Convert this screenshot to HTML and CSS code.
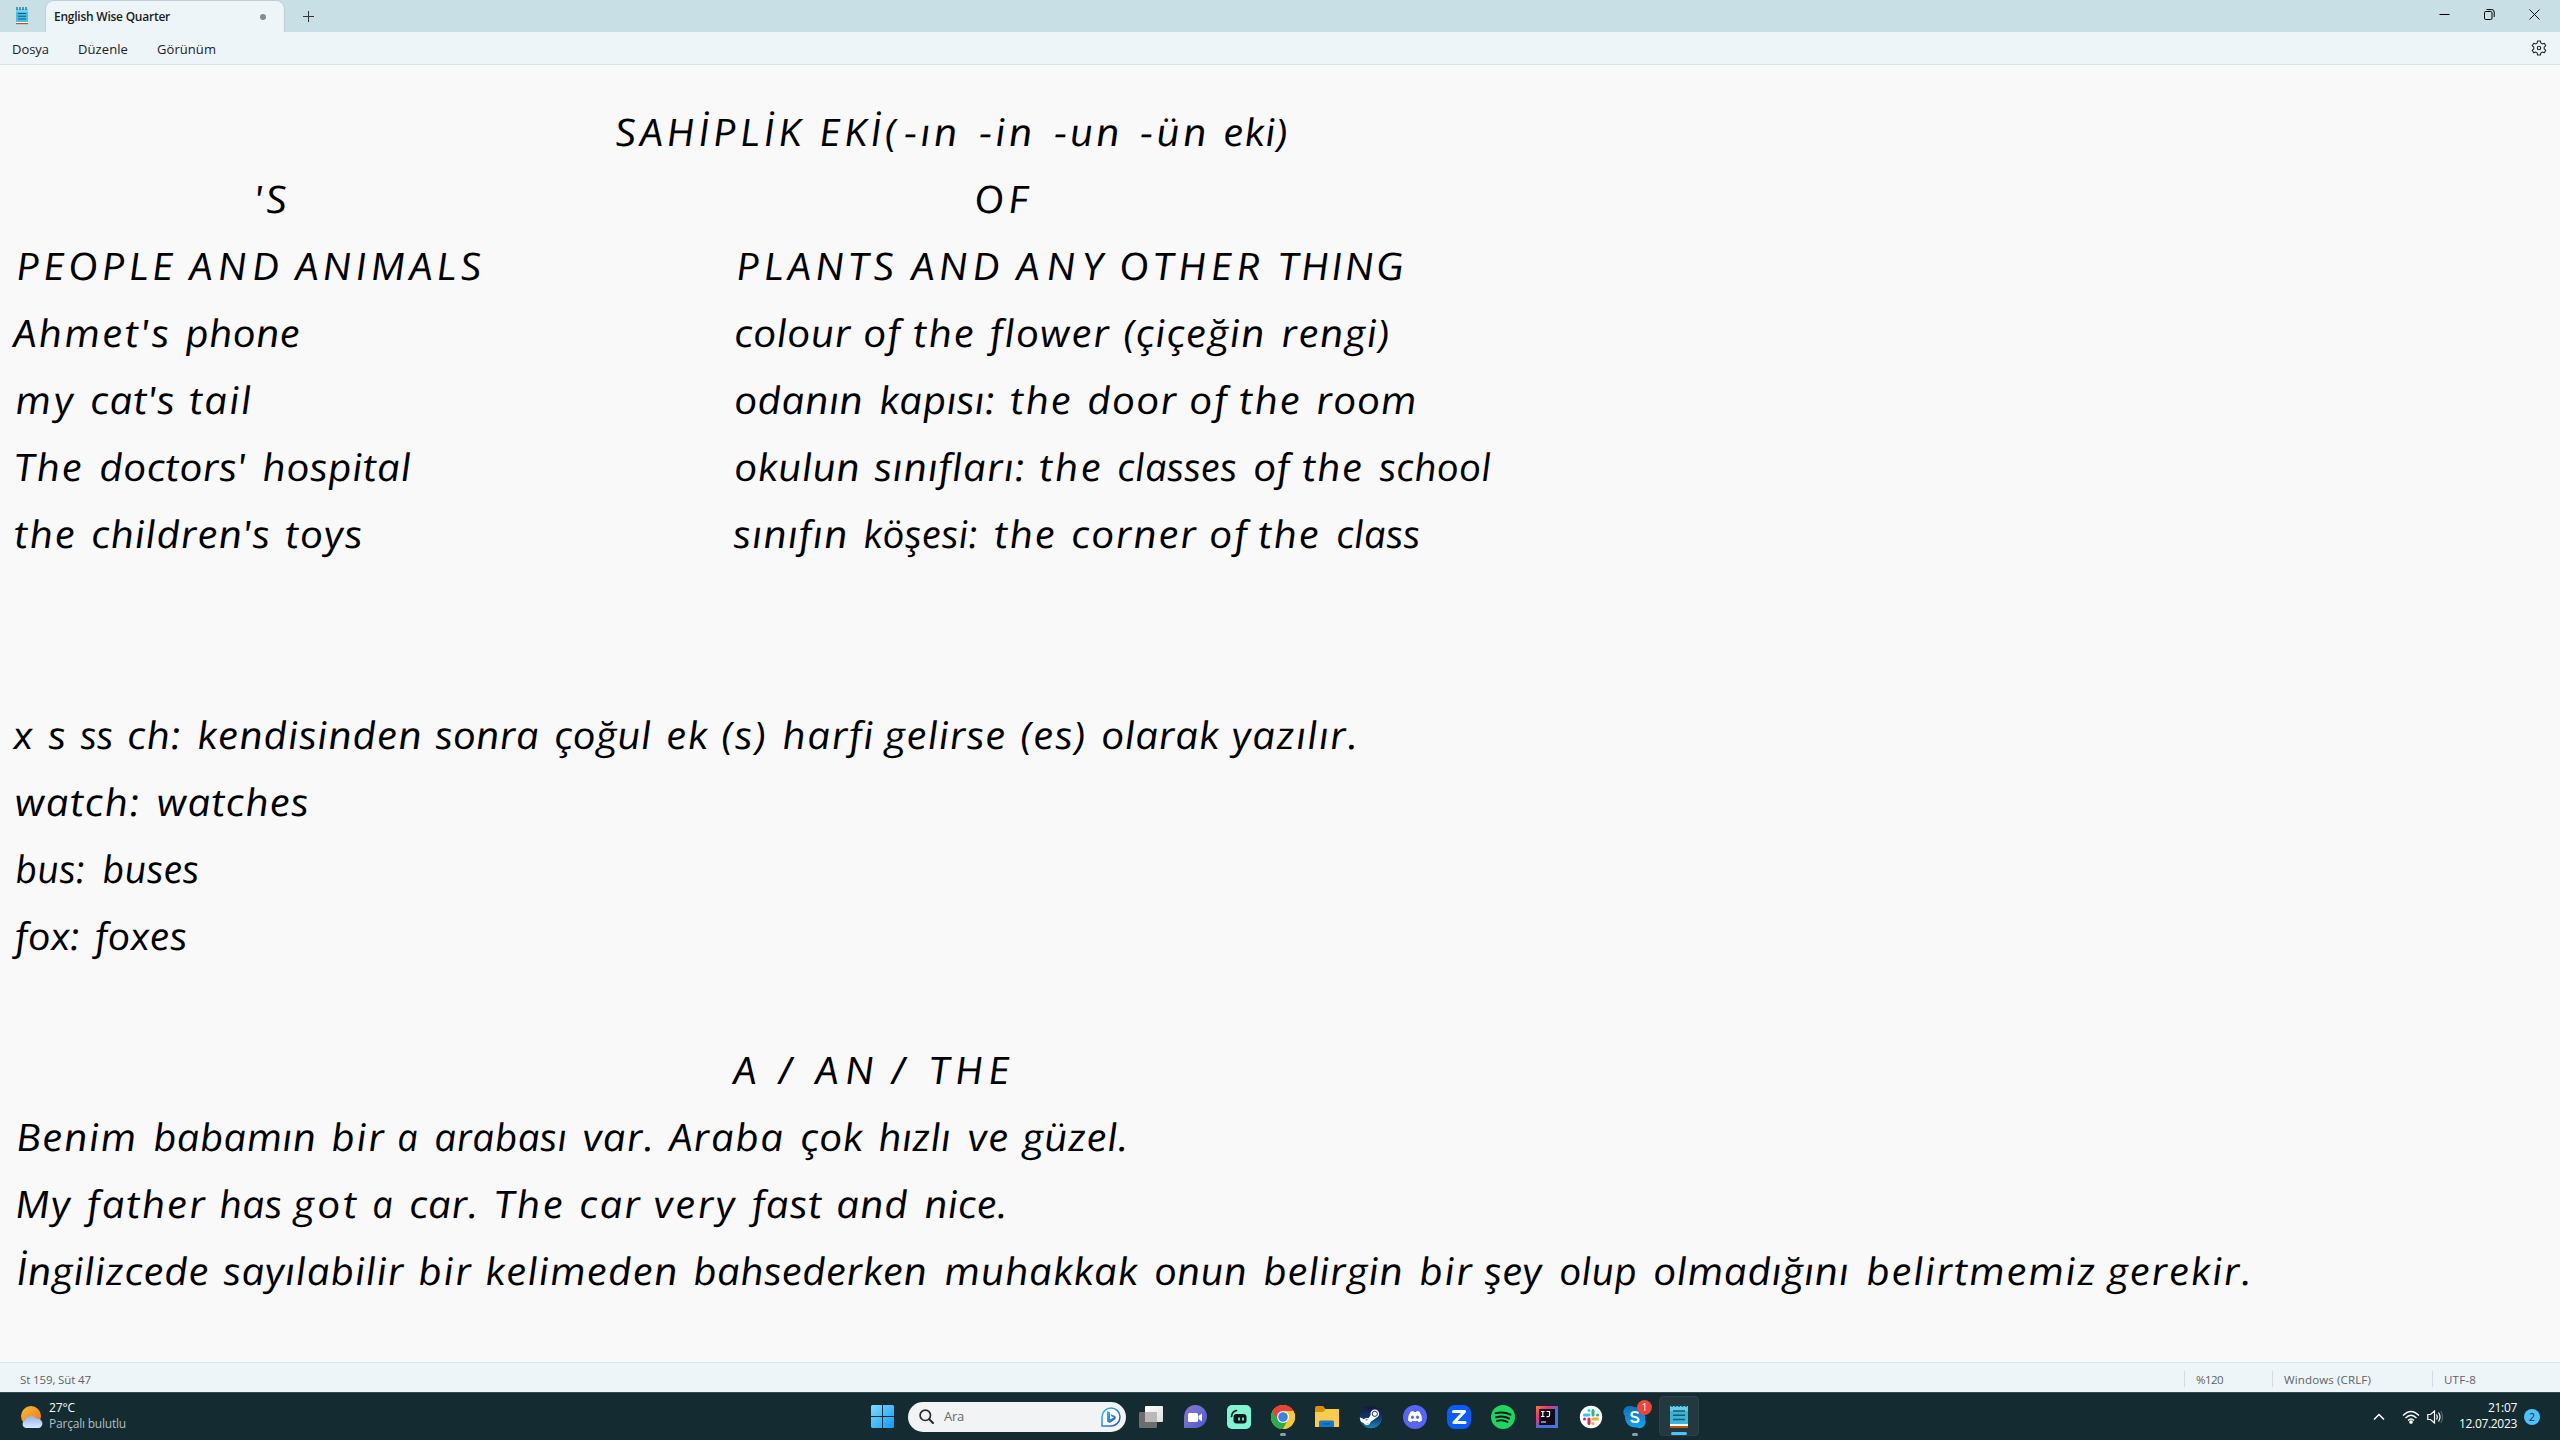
FILE: index.html
```html
<!DOCTYPE html>
<html lang="tr">
<head>
<meta charset="utf-8">
<title>English Wise Quarter</title>
<link rel="stylesheet" href="styles.css">
</head>
<body>
<header class="titlebar">
  <svg class="app-icon" width="14" height="18" viewBox="0 0 14 18"><rect x="1" y="2" width="12" height="13" fill="#45bfe0"/><path d="M1 2h12v3H1z" fill="#6fd4ee"/><path d="M2 0v3M5 0v3M8 0v3M11 0v3" stroke="#1b6f93" stroke-width="1.3"/><path d="M3 6.5h8M3 9.3h8M3 12h8" stroke="#0d5c86" stroke-width="1.1"/><path d="M1 15h12v1H1z" fill="#f5f5f5"/><path d="M1 16h12v1.2H1z" fill="#b5561a"/></svg>
  <div class="tab"><span class="tab-name" data-w="116">English Wise Quarter</span><i class="unsaved"></i></div>
  <svg class="new-tab" width="11" height="11" viewBox="0 0 11 11"><path d="M5.5 0v11M0 5.5h11" stroke="#333"/></svg>
  <svg class="caption minimize" width="11" height="11" viewBox="0 0 11 11"><path d="M.5 5.5h10" stroke="#000"/></svg>
  <svg class="caption restore" width="11" height="11" viewBox="0 0 11 11" fill="none" stroke="#000"><rect x=".5" y="2.5" width="7.5" height="8" rx="1.3"/><path d="M2.5 .6h5.3q2.4 0 2.4 2.4v5"/></svg>
  <svg class="caption close" width="11" height="11" viewBox="0 0 11 11"><path d="M.5.5l10 10M10.500.5l-10 10" stroke="#111"/></svg>
</header>
<nav class="menubar">
  <span data-w="37">Dosya</span><span data-w="50">Düzenle</span><span data-w="59">Görünüm</span>
  <svg class="gear" width="16" height="16" viewBox="0 0 16 16" fill="none" stroke="#222" stroke-width="1.1" stroke-linejoin="round"><path d="M6.600 1h2.800l.5 2.100 1.300.8 2.100-.7 1.500 2.500-1.600 1.400v1.800l1.600 1.400-1.500 2.500-2.100-.7-1.300.8-.5 2.100H6.600l-.5-2.100-1.300-.8-2.100.7-1.500-2.500 1.600-1.400V7.100L1.200 5.700l1.500-2.500 2.100.7 1.300-.8z"/><circle cx="8" cy="8" r="1.700"/></svg>
</nav>
<main class="editor" id="editor"></main>
<footer class="statusbar">
  <span class="cell position"><b data-w="71">St 159, Süt 47</b></span>
  <span class="cell zoom"><b data-w="27">%120</b></span>
  <span class="cell eol"><b data-w="87">Windows (CRLF)</b></span>
  <span class="cell encoding"><b data-w="32">UTF-8</b></span>
</footer>
<div class="taskbar">
  <div class="weather">
    <svg width="24" height="24" viewBox="0 0 24 24"><defs><linearGradient id="sun" x2="1" y2="1"><stop stop-color="#f9bd32"/><stop offset="1" stop-color="#f0701b"/></linearGradient><linearGradient id="cloud" x2="0" y2="1"><stop stop-color="#8eb4f2"/><stop offset="1" stop-color="#dce8fc"/></linearGradient></defs><circle cx="11" cy="11" r="10" fill="url(#sun)"/><path d="M6 23a4 4 0 0 1-.5-7.800 6 6 0 0 1 11-1.200 4.600 4.600 0 0 1 2.500 9z" fill="url(#cloud)"/></svg>
    <div class="weather-text"><span data-w="26">27°C</span><span class="dim" data-w="77">Parçalı bulutlu</span></div>
  </div>
  <svg class="start" width="23" height="23" viewBox="0 0 23 23"><defs><linearGradient id="win" x2="1" y2="1"><stop stop-color="#7fdcff"/><stop offset="1" stop-color="#0c9bf5"/></linearGradient></defs><path d="M1 0h10v11H0V1zM12 0h10l1 1v10H12zM0 12h11v11H1l-1-1zM12 12h11v10l-1 1H12z" fill="url(#win)"/></svg>
  <div class="search">
    <svg width="15" height="15" viewBox="0 0 15 15" fill="none" stroke="#2a2a2e" stroke-linecap="round"><circle cx="6.300" cy="6.300" r="5.200" stroke-width="1.700"/><path d="M10.200 10.200L14 14" stroke-width="2"/></svg>
    <span class="search-label" data-w="20">Ara</span>
    <svg class="bing" width="20" height="20" viewBox="0 0 20 20"><defs><linearGradient id="bing" x2="1" y2="1"><stop stop-color="#32bdf0"/><stop offset="1" stop-color="#2452cc"/></linearGradient></defs><path d="M1 19V10a9 9 0 1 1 9 9z" fill="#fff" stroke="url(#bing)" stroke-width="1.500"/><path d="M6 4l3 1.200v7l4-1.800-2.700-1.200L9.500 7 14 9c1 .5 1 2.500 0 3.500L8.500 16 6 14.500z" fill="url(#bing)"/></svg>
  </div>
  <div class="apps">
    <div class="app"><svg viewBox="0 0 24 24"><defs><linearGradient id="tv" x2="1" y2="1"><stop stop-color="#fff"/><stop offset="1" stop-color="#ddd"/></linearGradient></defs><rect x="6" y="1" width="18" height="16" rx="1" fill="url(#tv)"/><rect y="7" width="18" height="16" rx="1" fill="#6d6d6d"/><path d="M6 7h12v10H6z" fill="#b8b8b8"/></svg></div>
    <div class="app"><svg viewBox="0 0 24 24"><defs><linearGradient id="chat" x2="1" y2="1"><stop stop-color="#9768cf"/><stop offset=".4" stop-color="#7073ce"/><stop offset="1" stop-color="#4b54ca"/></linearGradient></defs><path d="M1 23V12A11.500 11.500 0 1 1 12.500 23z" fill="url(#chat)"/><rect x="5" y="8" width="10" height="9" rx="1.500" fill="#fff"/><path d="M15.500 11L19 8.500v8L15.500 14z" fill="#fff"/></svg></div>
    <div class="app"><svg viewBox="0 0 24 24"><rect width="24" height="24" rx="5" fill="#80f5d2"/><rect x="6.500" y="9" width="13" height="9.500" rx="3" fill="#09161d"/><path d="M4.500 11.500q.5-5 5-6" fill="none" stroke="#09161d" stroke-width="1.700" stroke-linecap="round"/><path d="M12 12.500v3M16 12.500v3" stroke="#80f5d2" stroke-width="1.700"/></svg></div>
    <div class="app running"><svg viewBox="0 0 24 24"><circle cx="12" cy="12" r="12" fill="#fcc934"/><path d="M12 12L1.600 6A12 12 0 0 0 12 24l5.200-9z" fill="#2da94f"/><path d="M1.600 6A12 12 0 0 1 22.400 6H12v6L6.800 15z" fill="#ea4335"/><path d="M22.400 6A12 12 0 0 1 12 24l5.200-9L17 7z" fill="#fcc934"/><circle cx="12" cy="12" r="6" fill="#fff"/><circle cx="12" cy="12" r="4.800" fill="#3b82f0"/></svg></div>
    <div class="app"><svg viewBox="0 0 24 24"><path d="M0 3q0-2 2-2h6l2.500 3H24v5H0z" fill="#d99208"/><path d="M0 7h8l3-3h13v18H0z" fill="#fbcc4c"/><path d="M4 22v-5q0-1.500 1.500-1.500h12q1.500 0 1.500 1.500v5z" fill="#1278d0"/><path d="M8 18.800h7" stroke="#0c5ba8" stroke-width="1.300"/></svg></div>
    <div class="app"><svg viewBox="0 0 24 24"><defs><linearGradient id="steam" x2="0" y2="1"><stop stop-color="#12193c"/><stop offset=".5" stop-color="#11366b"/><stop offset="1" stop-color="#1687bd"/></linearGradient><clipPath id="round"><circle cx="12" cy="12" r="11.200"/></clipPath></defs><circle cx="12" cy="12" r="11.200" fill="url(#steam)"/><g clip-path="url(#round)"><path d="M0 12l8 3.500 4-6 5 3.500-7 5-3 1-7-3z" fill="#fff"/></g><circle cx="8" cy="16.500" r="2.800" fill="none" stroke="#fff" stroke-width="1.200"/><circle cx="15.800" cy="8.800" r="4.300" fill="#fff"/><circle cx="15.800" cy="8.800" r="2.600" fill="#fff" stroke="#173665" stroke-width="1"/></svg></div>
    <div class="app"><svg viewBox="0 0 24 24"><circle cx="12" cy="12" r="12" fill="#5865f2"/><path d="M7.500 6.800q1.400-.7 2.800-.8l.5 1h2.400l.5-1q1.400.1 2.800.8 2.800 4 2.500 8.800-1.600 1.300-3.300 1.600l-.9-1.400q-2.800.9-5.600 0l-.9 1.400Q6.600 16.900 5 15.600 4.700 10.800 7.500 6.800z" fill="#fff"/><ellipse cx="9.500" cy="12.200" rx="1.500" ry="1.700" fill="#5865f2"/><ellipse cx="14.500" cy="12.200" rx="1.500" ry="1.700" fill="#5865f2"/></svg></div>
    <div class="app"><svg viewBox="0 0 24 24"><rect width="24" height="24" rx="8" fill="#0b5cff"/><path d="M6.500 6.500h11L7 17.500h11" fill="none" stroke="#fff" stroke-width="3.200" stroke-linejoin="round" stroke-linecap="round"/></svg></div>
    <div class="app"><svg viewBox="0 0 24 24"><circle cx="12" cy="12" r="12" fill="#1fd562"/><path d="M4.500 8.300q8-2.300 15 1.300M5.200 12.200q7-1.900 12.800 1.300M6 15.900q6-1.500 10.500 1.100" fill="none" stroke="#101a14" stroke-width="2" stroke-linecap="round"/></svg></div>
    <div class="app"><svg viewBox="0 0 24 24"><defs><linearGradient id="ij" x2="1" y2="1"><stop stop-color="#fc7a25"/><stop offset=".3" stop-color="#f0307c"/><stop offset=".6" stop-color="#3c72e8"/><stop offset="1" stop-color="#4777e0"/></linearGradient></defs><rect x="1" y="1" width="22" height="22" fill="url(#ij)"/><rect x="4" y="4" width="16" height="16" fill="#110a17"/><path d="M6 6.500h3.500M7.800 6.500v5M6 11.500h3.500M11.500 6.500h3v4q0 1.200-1.300 1.200H11.500M6 17h5" stroke="#fff" stroke-width="1.200" fill="none"/></svg></div>
    <div class="app"><svg viewBox="0 0 24 24"><circle cx="12" cy="12" r="11.200" fill="#fff"/><g stroke-width="3" stroke-linecap="round"><path d="M10 5.500v0M5.500 10H10" stroke="#36c5f0"/><path d="M14 5.500V10M18.500 10h0" stroke="#2eb67d"/><path d="M14 14h4.500M14 18.500h0" stroke="#ecb22e"/><path d="M10 14v4.500M5.500 14h0" stroke="#e01e5a"/></g></svg></div>
    <div class="app running"><svg viewBox="0 0 24 24"><defs><linearGradient id="skype" x2="0" y2="1"><stop stop-color="#0b72bb"/><stop offset="1" stop-color="#12a4ed"/></linearGradient></defs><path d="M7 1q3 0 4.500 1A10.500 10.500 0 0 1 22 14.500 6 6 0 0 1 14 22.500 10.500 10.500 0 0 1 2 11 6 6 0 0 1 7 1z" fill="url(#skype)"/><path d="M15.500 8.500Q14.500 7 12 7q-3.500 0-3.500 2.400 0 1.900 3.500 2.600t3.500 2.700Q15.500 17 12 17q-2.800 0-4-2" fill="none" stroke="#fff" stroke-width="2.200"/></svg><span class="count">1</span></div>
    <div class="app active"><svg viewBox="0 0 24 24"><path d="M3 2h18v18H3z" fill="#3fb3d3"/><path d="M3 2h18v5H3z" fill="#66cfe6"/><path d="M5 0v3M8.500 0v3M12 0v3M15.500 0v3M19 0v3" stroke="#124a62" stroke-width="1.500"/><path d="M6 7h12M6 11.200h12M6 15.400h12" stroke="#0b5d7c" stroke-width="1.500"/><path d="M3 20h18v2H3z" fill="#fafafa"/><path d="M3 22h18v2H3z" fill="#b15a19"/></svg></div>
  </div>
  <div class="tray">
    <svg width="12" height="8" viewBox="0 0 12 8"><path d="M1 6.500l5-5 5 5" fill="none" stroke="#fff" stroke-width="1.500"/></svg>
    <svg class="wifi" width="18" height="14" viewBox="0 0 18 14" fill="none" stroke="#fff" stroke-width="1.300"><path d="M1 5.500q8-8 16 0M3.500 8q5.500-5.500 11 0M6 10.500q3-3 6 0"/><circle cx="9" cy="12" r="1.200" fill="#fff"/></svg>
    <svg class="sound" width="17" height="14" viewBox="0 0 17 14" fill="none" stroke="#fff" stroke-width="1.200"><path d="M.8 4.500h2.700L7.500 1v12L3.500 9.500H.8zM9.500 4.500q1.500 2.500 0 5M11.500 2.500q3 4.500 0 9"/><path d="M13.800 1q3.500 6 0 12" stroke="#53656a"/></svg>
    <div class="clock"><span data-w="29">21:07</span><span data-w="58">12.07.2023</span></div>
    <span class="badge">2</span>
  </div>
</div>
<script src="notes.js"></script>
</body>
</html>
```
FILE: styles.css
```css
* { box-sizing: border-box; }
body {
  margin: 0;
  width: 2560px;
  height: 1440px;
  overflow: hidden;
  display: grid;
  grid-template-rows: 32px 33px 1297px 30px 48px;
  background: #f9f9f9;
  font: 12px "Open Sans", "Noto Sans", sans-serif;
  color: #1b1b1b;
}
svg { display: block; flex: none; }
[data-w] { white-space: pre; }

.titlebar { display: flex; align-items: center; background: #c9dfe6; }
.app-icon { margin: 0 16px 0 15px; }
.tab {
  width: 238px;
  height: 31px;
  align-self: flex-end;
  margin-left: 1px;
  padding: 0 18px 0 8px;
  display: flex;
  align-items: center;
  justify-content: space-between;
  background: #eef5f8;
  border-radius: 8px 8px 0 0;
  box-shadow: 0 0 0 1px #bacfd7;
}
.tab-name { font-weight: 600; }
.unsaved { width: 6px; height: 6px; border-radius: 50%; background: #868a8c; }
.new-tab { margin-left: 19px; }
.minimize { margin-left: auto; margin-bottom: 3px; }
.restore { margin: 0 34px 4px; }
.close { margin: 0 20px 4px 0; }

.menubar {
  display: flex;
  align-items: center;
  gap: 29px;
  padding: 1px 13px 0 12px;
  background: #eef5f8;
  border-bottom: 1px solid #d9e1e5;
  font-size: 13px;
}
.gear { margin-left: auto; margin-bottom: 1px; }

.editor {
  padding-top: 33px;
  font: italic 38px/67px "Open Sans", "Noto Sans", sans-serif;
  color: #000;
}
.line { display: flex; height: 67px; }
.word { flex: none; white-space: pre; transform-origin: 0 48px; }

.statusbar {
  display: flex;
  align-items: center;
  background: #eef5f8;
  border-top: 1px solid #dde3e6;
  color: #5c6265;
}
.cell { height: 16px; line-height: 18px; margin-top: 3px; padding-left: 11px; border-left: 1px solid #d3dbdf; }
.cell b { font-weight: 400; font-size: 11.500px; }
.position { width: 2184px; padding-left: 20px; border: 0; }
.zoom { width: 88px; }
.eol { width: 160px; }

.taskbar {
  display: flex;
  align-items: center;
  background: #132b31;
  border-top: 1px solid #354a51;
  color: #fff;
}
.weather { width: 871px; display: flex; align-items: center; gap: 5px; padding-left: 20px; }
.weather-text { display: flex; flex-direction: column; line-height: 16px; padding-bottom: 1px; }
.weather-text span { align-self: flex-start; }
.dim { color: #b4bfc2; }
.start { margin-right: 14px; }
.search {
  width: 218px;
  height: 30px;
  border-radius: 15px;
  background: #f1f3f5;
  color: #666a6d;
  display: flex;
  align-items: center;
  gap: 10px;
  padding: 0 5px 0 11px;
  font-size: 13px;
}
.search-label { padding-bottom: 1px; }
.bing { margin-left: auto; }
.apps { display: flex; margin-left: 3px; }
.app { position: relative; width: 44px; height: 47px; display: grid; place-items: center; }
.app svg { width: 24px; height: 24px; }
.active { width: 40px; height: 40px; margin: 3px 2px; border-radius: 4px; background: #23393f; border: 1px solid #2d4248; }
.running::after, .active::after {
  content: "";
  position: absolute;
  left: 50%;
  bottom: 4px;
  width: 6px;
  height: 3px;
  margin-left: -3px;
  border-radius: 2px;
  background: #929da0;
}
.active::after { width: 16px; margin-left: -8px; bottom: 0; background: #4cc2ff; }
.count {
  position: absolute;
  left: 24px;
  top: 7px;
  width: 15px;
  height: 15px;
  border-radius: 50%;
  background: #f04438;
  font-size: 10px;
  line-height: 15px;
  text-align: center;
}
.tray { margin-left: auto; display: flex; align-items: center; padding-right: 20px; }
.wifi { margin-left: 17px; }
.sound { margin-left: 7px; }
.clock { width: 73px; display: flex; flex-direction: column; align-items: flex-end; line-height: 16px; padding-bottom: 1px; }
.badge {
  width: 16px;
  height: 16px;
  margin-left: 7px;
  border-radius: 50%;
  background: #4cc2ff;
  color: #0a2730;
  font-size: 10.500px;
  line-height: 16px;
  text-align: center;
}
```
FILE: notes.js
```js
// Each line of the note: word, left edge, right edge; words are separated by "|".
const lines = `SAHİPLİK 616 802|EKİ( 820 897|-ın 905 958|-in 980 1033|-un 1055 1120|-ün 1141 1207|eki) 1224 1287
'S 255 287|OF 975 1029
PEOPLE 17 174|AND 190 281|ANIMALS 296 482|PLANTS 737 895|AND 912 1001|ANY 1017 1106|OTHER 1120 1261|THING 1279 1404
Ahmet's 14 169|phone 186 299|colour 735 850|of 864 900|the 914 974|flower 991 1109|(çiçeğin 1124 1264|rengi) 1282 1389
my 16 74|cat's 91 174|tail 190 251|odanın 735 862|kapısı: 880 994|the 1011 1071|door 1088 1176|of 1190 1227|the 1240 1300|room 1317 1416
The 15 82|doctors' 100 245|hospital 263 410|okulun 735 859|sınıfları: 875 1024|the 1040 1101|classes 1118 1236|of 1254 1289|the 1303 1362|school 1380 1490
the 15 75|children's 92 269|toys 286 362|sınıfın 734 847|köşesi: 864 977|the 995 1055|corner 1072 1196|of 1210 1247|the 1259 1319|class 1337 1419


x 14 34|s 49 65|ss 81 112|ch: 128 180|kendisinden 198 421|sonra 436 538|çoğul 555 650|ek 667 707|(s) 722 766|harfi 783 873|gelirse 885 1005|(es) 1021 1085|olarak 1102 1218|yazılır. 1233 1357
watch: 16 139|watches 158 308
bus: 16 84|buses 103 198
fox: 16 79|foxes 96 186

A 734 763|/ 779 800|AN 816 876|/ 892 914|THE 930 1011
Benim 17 136|babamın 154 315|bir 332 384|a 398 417|arabası 435 566|var. 584 653|Araba 670 783|çok 801 862|hızlı 879 950|ve 969 1008|güzel. 1023 1127
My 16 70|father 88 205|has 220 281|got 294 357|a 373 392|car. 410 477|The 495 563|car 580 640|very 655 735|fast 753 821|and 837 907|nice. 925 1006
İngilizcede 17 208|sayılabilir 224 403|bir 419 471|kelimeden 486 677|bahsederken 694 926|muhakkak 945 1137|onun 1155 1246|belirgin 1264 1402|bir 1420 1472|şey 1485 1541|olup 1560 1636|olmadığını 1654 1848|belirtmemiz 1867 2095|gerekir. 2108 2251`;

// Track the letters so that a label takes exactly the given width.
function fit(el, width) {
  const n = el.textContent.length;
  const natural = el.getBoundingClientRect().width;
  if (n > 1) el.style.letterSpacing = (width - natural) / n + 'px';
}

// Widest and narrowest horizontal stretch of the letterforms; tracking takes up the rest.
const MAX_STRETCH = 1.09;
const MIN_STRETCH = 0.95;

const editor = document.getElementById('editor');
for (const line of lines.split('\n')) {
  const row = document.createElement('div');
  row.className = 'line';
  editor.append(row);
  let pen = 0;
  for (const item of line ? line.split('|') : []) {
    const [text, left, right] = item.split(' ');
    const word = document.createElement('span');
    word.className = 'word';
    word.textContent = text;
    row.append(word);
    const start = Number(left), end = Number(right) + 2;
    const natural = word.getBoundingClientRect().width;
    const stretch = Math.min(MAX_STRETCH, Math.max(MIN_STRETCH, (end - start) / natural));
    if (text.length > 1) word.style.letterSpacing = ((end - start) / stretch - natural) / (text.length - 0.5) + 'px';
    word.style.transform = `scaleX(${stretch.toFixed(4)}) skewX(5deg)`;
    word.style.marginLeft = start - pen + 'px';
    word.style.width = end - start + 'px';
    word.append(' ');
    pen = end;
  }
}
document.querySelectorAll('[data-w]').forEach(el => {
  el.style.display = 'inline-block';
  fit(el, Number(el.dataset.w));
});
```
